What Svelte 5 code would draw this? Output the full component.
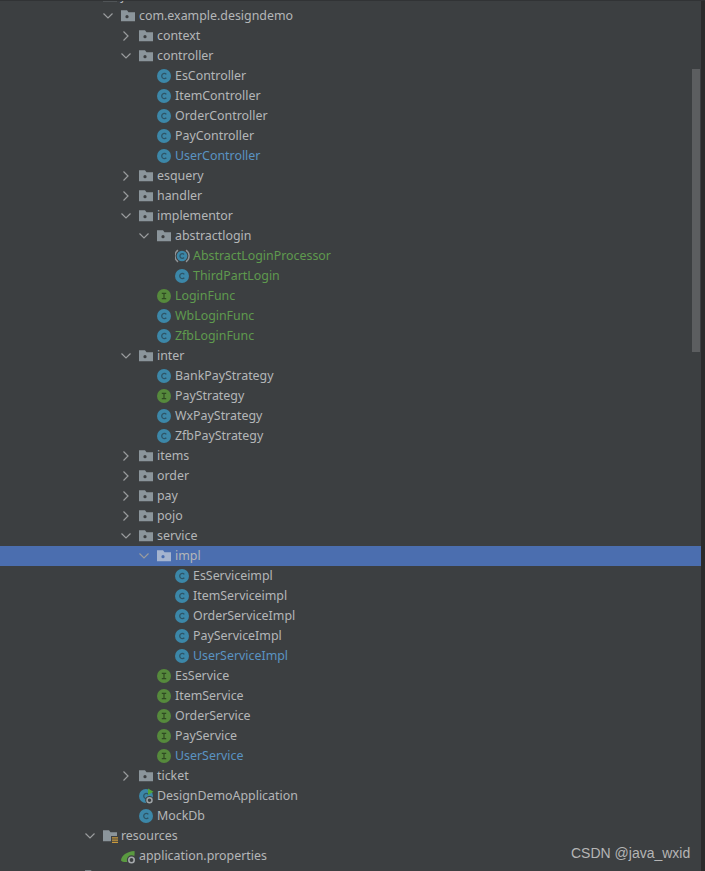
<script>
  const rows = [
    { d: -1, t: 'java', i: 'folder', c: 'open' },
    { d: 0, t: 'com.example.designdemo', i: 'pkg', c: 'open' },
    { d: 1, t: 'context', i: 'pkg', c: 'closed' },
    { d: 1, t: 'controller', i: 'pkg', c: 'open' },
    { d: 2, t: 'EsController', i: 'c' },
    { d: 2, t: 'ItemController', i: 'c' },
    { d: 2, t: 'OrderController', i: 'c' },
    { d: 2, t: 'PayController', i: 'c' },
    { d: 2, t: 'UserController', i: 'c', k: 'blue' },
    { d: 1, t: 'esquery', i: 'pkg', c: 'closed' },
    { d: 1, t: 'handler', i: 'pkg', c: 'closed' },
    { d: 1, t: 'implementor', i: 'pkg', c: 'open' },
    { d: 2, t: 'abstractlogin', i: 'pkg', c: 'open' },
    { d: 3, t: 'AbstractLoginProcessor', i: 'abs', k: 'green' },
    { d: 3, t: 'ThirdPartLogin', i: 'c', k: 'green' },
    { d: 2, t: 'LoginFunc', i: 'i', k: 'green' },
    { d: 2, t: 'WbLoginFunc', i: 'c', k: 'green' },
    { d: 2, t: 'ZfbLoginFunc', i: 'c', k: 'green' },
    { d: 1, t: 'inter', i: 'pkg', c: 'open' },
    { d: 2, t: 'BankPayStrategy', i: 'c' },
    { d: 2, t: 'PayStrategy', i: 'i' },
    { d: 2, t: 'WxPayStrategy', i: 'c' },
    { d: 2, t: 'ZfbPayStrategy', i: 'c' },
    { d: 1, t: 'items', i: 'pkg', c: 'closed' },
    { d: 1, t: 'order', i: 'pkg', c: 'closed' },
    { d: 1, t: 'pay', i: 'pkg', c: 'closed' },
    { d: 1, t: 'pojo', i: 'pkg', c: 'closed' },
    { d: 1, t: 'service', i: 'pkg', c: 'open' },
    { d: 2, t: 'impl', i: 'pkg', c: 'open', sel: true },
    { d: 3, t: 'EsServiceimpl', i: 'c' },
    { d: 3, t: 'ItemServiceimpl', i: 'c' },
    { d: 3, t: 'OrderServiceImpl', i: 'c' },
    { d: 3, t: 'PayServiceImpl', i: 'c' },
    { d: 3, t: 'UserServiceImpl', i: 'c', k: 'blue' },
    { d: 2, t: 'EsService', i: 'i' },
    { d: 2, t: 'ItemService', i: 'i' },
    { d: 2, t: 'OrderService', i: 'i' },
    { d: 2, t: 'PayService', i: 'i' },
    { d: 2, t: 'UserService', i: 'i', k: 'blue' },
    { d: 1, t: 'ticket', i: 'pkg', c: 'closed' },
    { d: 1, t: 'DesignDemoApplication', i: 'boot' },
    { d: 1, t: 'MockDb', i: 'c' },
    { d: -1, t: 'resources', i: 'res', c: 'open' },
    { d: 0, t: 'application.properties', i: 'props' },
    { d: -2, t: 'test', i: 'folder', c: 'open' }
  ];
</script>

<div class="page">
  <div class="edge"></div>
  <div class="body">
    <div class="tree">
      {#each rows as r}
        <div class="row" class:sel={r.sel} style="padding-left: {101.5 + 18 * r.d}px">
          <span class="chev">
            {#if r.c === 'open'}
              <svg width="12" height="12" viewBox="0 0 12 12"><path d="M1.5 3.500l4.500 4.500 4.500-4.500" /></svg>
            {:else if r.c === 'closed'}
              <svg width="12" height="12" viewBox="0 0 12 12"><path d="M3.500 1.500L8 6l-4.500 4.500" /></svg>
            {/if}
          </span>
          <span class="icon">
            {#if r.i === 'pkg' || r.i === 'folder' || r.i === 'res'}
              <svg width="16" height="16" viewBox="0 0 16 16">
                <path class="fold" d="M0 2.200h6l1.500 2H14v9H0z" />
                {#if r.i === 'pkg'}<circle class="dot" cx="6" cy="8.700" r="1.600" />{/if}
                {#if r.i === 'res'}
                  <path d="M8 8h8v8H8z" fill="#3c3f41" />
                  <path class="bars" d="M9 9.200h6v1.200H9zM9 11.500h6v1.200H9zM9 13.800h6V15H9z" />
                {/if}
              </svg>
            {:else if r.i === 'c' || r.i === 'boot'}
              <svg width="16" height="16" viewBox="0 0 16 16">
                <circle class="cc" cx="7" cy="8" r="7" />
                <path class="letter" d="M9.300 6.300A2.600 2.600 0 1 0 9.300 9.700" />
                {#if r.i === 'boot'}
                  <path d="M9 .5l5.500 3.300L9 7z" fill="#52a33f" />
                  <circle cx="10.500" cy="12.300" r="4.200" fill="#3c3f41" />
                  <circle cx="10.500" cy="12.300" r="2.500" fill="none" stroke="#9ea3a6" stroke-width="1.500" />
                {/if}
              </svg>
            {:else if r.i === 'abs'}
              <svg width="16" height="16" viewBox="0 0 16 16">
                <path class="ring" d="M3 2.200A7 7 0 0 0 3 13.800M11 2.200A7 7 0 0 1 11 13.800" />
                <circle class="cc" cx="7" cy="8" r="5.300" />
                <path class="letter" d="M9 6.500A2.300 2.300 0 1 0 9 9.500" />
              </svg>
            {:else if r.i === 'i'}
              <svg width="16" height="16" viewBox="0 0 16 16">
                <circle class="ci" cx="7" cy="8" r="7" />
                <path class="letter2" d="M4.800 5.300h4.400M4.800 10.700h4.400M7 5.300v5.400" />
              </svg>
            {:else if r.i === 'props'}
              <svg width="16" height="16" viewBox="0 0 16 16">
                <path d="M0 12.500C0 7.500 6 3.500 13.500 3c.5 4.500-.5 9-5 10.500-3.500 1-7 .8-8.500-1z" fill="#5a9a40" />
                <circle cx="10.500" cy="12" r="4.700" fill="#3c3f41" />
                <circle cx="10.500" cy="12" r="2.700" fill="none" stroke="#a4a8ab" stroke-width="1.600" />
              </svg>
            {/if}
          </span>
          <span class="label {r.k || ''}">{r.t}</span>
        </div>
      {/each}
    </div>
    <div class="track"><div class="thumb"></div></div>
  </div>
  <div class="mark">CSDN @java_wxid</div>
</div>

<style>
  :global(body) {
    margin: 0;
    background: #3c3f41;
  }
  .page {
    position: relative;
    width: 705px;
    height: 871px;
    overflow: hidden;
    background: #3c3f41;
    display: flex;
    flex-direction: column;
    font-family: "Noto Sans", "Open Sans", sans-serif;
  }
  .edge {
    height: 1px;
    flex: none;
    background: #313335;
    position: relative;
    z-index: 1;
  }
  .body {
    flex: 1;
    display: flex;
    min-height: 0;
  }
  .tree {
    flex: 1;
    margin-top: -15px;
    min-width: 0;
  }
  .row {
    height: 20px;
    display: flex;
    align-items: center;
    box-sizing: border-box;
  }
  .row.sel {
    background: #4b6eaf;
  }
  .chev {
    width: 12px;
    height: 12px;
    margin-right: 7.500px;
    flex: none;
    display: flex;
  }
  .chev path {
    fill: none;
    stroke: #9a9c9e;
    stroke-width: 1.200;
  }
  .icon {
    width: 18px;
    height: 16px;
    flex: none;
    display: flex;
  }
  .fold {
    fill: #8b959b;
  }
  .dot {
    fill: #3c3f41;
  }
  .sel .fold {
    fill: #a5b4cf;
  }
  .sel .dot {
    fill: #4b6eaf;
  }
  .bars {
    fill: #c99a3d;
  }
  .cc {
    fill: #3c87a8;
  }
  .ci {
    fill: #568a3c;
  }
  .ring {
    fill: none;
    stroke: #8f9396;
    stroke-width: 1.400;
  }
  .letter {
    fill: none;
    stroke: #2d5567;
    stroke-width: 1.300;
  }
  .letter2 {
    fill: none;
    stroke: #2f4a22;
    stroke-width: 1.200;
  }
  .label {
    font-size: 12.400px;
    line-height: 20px;
    color: #b4b6b8;
    white-space: nowrap;
  }
  .label.blue {
    color: #5a93c2;
  }
  .label.green {
    color: #5f9a4e;
  }
  .track {
    width: 13px;
    flex: none;
    box-sizing: border-box;
    margin-left: -13px;
    border-right: 4px solid #2b2b2b;
    position: relative;
  }
  .thumb {
    width: 8px;
    height: 283px;
    margin-top: 68px;
    background: #5c5e60;
  }
  .mark {
    position: absolute;
    left: 571px;
    top: 845px;
    font-family: "Liberation Sans", Arial, sans-serif;
    font-size: 14px;
    line-height: 16px;
    color: #b5b5b5;
    white-space: nowrap;
  }
</style>
